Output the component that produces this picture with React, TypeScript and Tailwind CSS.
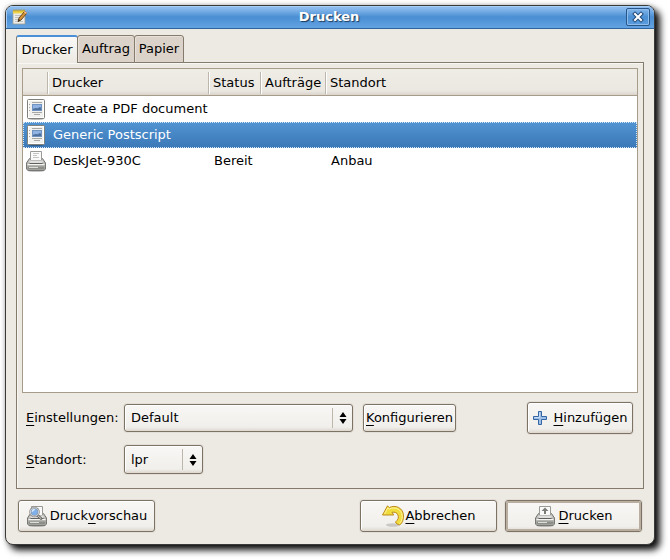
import { useId, useState, type ReactNode } from "react";

function NotepadIcon() {
  return (
    <svg viewBox="0 0 16 16" className="size-4 shrink-0" aria-hidden="true">
      <rect x="1" y="2" width="12" height="13" fill="#ececea" stroke="#a19f94" strokeWidth="0.8" />
      <path d="M1 1.500h12v3H1z" fill="#edd44a" />
      <path d="M2 .5v2M4 .5v2M6 .5v2M8 .5v2M10 .5v2M12 .5v2" stroke="#b78a10" strokeWidth="0.9" />
      <path d="M3 6.500h7M3 8.500h5M3 10.500h4M3 12.500h8" stroke="#b5b5b0" strokeWidth="0.8" />
      <path d="M6 12.500l1-3.500 5.500-6.500 2.500 1.500-6 7z" fill="#d69238" stroke="#5a3a10" strokeWidth="0.9" />
      <path d="M6 12.500l.8-2.500 1.500 1.400z" fill="#2b2118" />
      <path d="M12.300 2.700l2.400 1.600" stroke="#e9b9a0" strokeWidth="1.400" />
    </svg>
  );
}

function DocumentIcon() {
  return (
    <svg viewBox="0 0 20 22" className="block h-[22px] w-5" aria-hidden="true">
      <ellipse cx="10" cy="20.800" rx="8" ry="1" fill="#000" opacity="0.35" />
      <rect x="1.500" y="1.500" width="17" height="19" rx="1" fill="#f0f0ee" stroke="#80827a" />
      <rect x="2.500" y="2.500" width="15" height="17" fill="none" stroke="#fff" />
      <path d="M3.500 6v1M3.500 9v1M3.500 12v1" stroke="#aaa" />
      <path d="M6 4.500h10M6 14.500h10M8 16.500h6" stroke="#a8a8a5" />
      <rect x="6" y="6" width="10" height="7" fill="#6f92c0" />
      <path d="M7 7h8v3l-2-1-2 2-2-1-2 1z" fill="#8fb3e3" />
      <path d="M7 12v-1l3-1 2 .5 2-1.500 1 1v2z" fill="#4d6f9c" />
    </svg>
  );
}

function PrinterIcon({ mark = "none" }: { mark?: "none" | "arrow" | "lens" }) {
  return (
    <svg viewBox="0 0 22 22" className="block h-[22px] w-[22px] shrink-0" aria-hidden="true">
      <ellipse cx="11" cy="20.500" rx="9" ry="1.300" fill="#000" opacity="0.3" />
      <path d="M4.500 8.500h13l3 4.500v6l-1.500 1.500h-16L1.500 19v-6z" fill="#b4b5b1" stroke="#777874" />
      <path d="M3 12.500l2-3h12l2 3z" fill="#d2d3cf" />
      <path d="M5.500 1.500h11v9h-11z" fill="#fafafa" stroke="#999a96" />
      {mark === "none" && <path d="M8 3.500h6M8 5.500h4M8 7.500h6" stroke="#c5c5c2" />}
      {mark === "arrow" && <path d="M11 2.500L7.500 6H10v3h2V6h2.500z" fill="#7c7d79" />}
      <path d="M5 10.500h12v3H5z" fill="#dfe0dd" />
      <path d="M4.500 13.500h13" stroke="#60615e" />
      <path d="M2.500 14.500h17" stroke="#f4f4f2" />
      <path d="M2.500 16.500h17v3h-17z" fill="#8d8e8a" />
      <path d="M4 17.500h9" stroke="#dddeda" />
      {mark === "lens" && (
        <g>
          <path d="M11 10l4 3.500" stroke="#686964" strokeWidth="2.800" strokeLinecap="round" />
          <path d="M11 10l4 3.500" stroke="#d6d7d2" strokeWidth="1" strokeLinecap="round" />
          <circle cx="8.500" cy="7" r="4.300" fill="#7fb0ea" stroke="#85868a" strokeWidth="2" />
          <circle cx="8.500" cy="7" r="4.200" fill="none" stroke="#dfe1e0" strokeWidth="0.900" />
          <path d="M6.300 6.800a2.500 2.500 0 012.500-2.300" fill="none" stroke="#dcebfb" strokeWidth="1.300" />
        </g>
      )}
    </svg>
  );
}

function UndoIcon() {
  return (
    <svg viewBox="0 0 24 24" className="block size-6 shrink-0" aria-hidden="true">
      <ellipse cx="12" cy="21" rx="7" ry="1.700" fill="#000" opacity="0.16" />
      <path
        d="M1.500 11L6.500 1.800L8.300 3.600C14 .5 22.500 3.500 22.500 12C22.500 16 21 20 18.500 20.800C16.500 20.500 15 19.500 14.500 18C17 16 18 13.500 17 11C16 8.500 13.500 7.800 11 8.300L12.700 11Z"
        fill="#f0dc3c"
        stroke="#bd8a1c"
        strokeLinejoin="round"
      />
      <path
        d="M3.500 10L6.800 3.800L8.300 5C13.500 2.300 21 5 21.200 12C21.200 15.500 20 18.500 18.300 19.500"
        fill="none"
        stroke="#fff5a0"
      />
    </svg>
  );
}

function PlusIcon() {
  return (
    <svg viewBox="0 0 16 16" className="block size-4 shrink-0" aria-hidden="true">
      <path d="M6.500 1.500h3v5h5v3h-5v5h-3v-5h-5v-3h5z" fill="#9ec0e6" stroke="#3465a4" strokeLinejoin="round" />
      <path d="M7.500 2.500v5h-5" fill="none" stroke="#c9def4" />
    </svg>
  );
}

function Mnemonic({ children }: { children: string }) {
  return <u className="decoration-1 underline-offset-3 [text-decoration-skip-ink:none]">{children}</u>;
}

const face =
  "rounded-[3px] border border-[#7d7365] bg-linear-to-b from-[#f8f7f5] via-[#f1efeb] via-85% to-[#ddd7cf] shadow-[inset_1px_1px_0_#fff,0_0_0_1px_#e3dfd8]";

function Button({ children, className }: { children: ReactNode; className: string }) {
  return (
    <button type="button" className={`${face} flex items-center justify-center whitespace-nowrap ${className}`}>
      {children}
    </button>
  );
}

function Select({ id, options, className }: { id: string; options: string[]; className: string }) {
  return (
    <div className={`relative ${className}`}>
      <select id={id} className={`${face} size-full appearance-none pr-7 pl-[6px] outline-none`}>
        {options.map((option) => (
          <option key={option}>{option}</option>
        ))}
      </select>
      <div className="pointer-events-none absolute inset-y-1 right-0 flex w-[21px] items-center justify-center border-l border-[#bdb6ab]">
        <svg viewBox="0 0 8 12" className="h-3 w-2" aria-hidden="true">
          <path d="M4 0l3.500 5h-7zM4 12l3.500-5h-7z" fill="#000" />
        </svg>
      </div>
    </div>
  );
}

const printers = [
  { name: "Create a PDF document", icon: <DocumentIcon />, status: "", jobs: "", location: "" },
  { name: "Generic Postscript", icon: <DocumentIcon />, status: "", jobs: "", location: "" },
  { name: "DeskJet-930C", icon: <PrinterIcon />, status: "Bereit", jobs: "", location: "Anbau" },
];

const columns = ["Drucker", "Status", "Aufträge", "Standort"];

function PrinterTable() {
  const [selected, setSelected] = useState(1);
  return (
    <div className="h-[325px] border border-[#a79b8a] bg-white">
      <table className="w-full table-fixed border-separate border-spacing-0 text-left">
        <colgroup>
          <col className="w-6" />
          <col className="w-[161px]" />
          <col className="w-[52px]" />
          <col className="w-[65px]" />
          <col />
        </colgroup>
        <thead>
          <tr className="h-[27px] bg-linear-to-b from-[#efece6] from-10% via-[#ebe8e2] via-80% to-[#d6d1c8]">
            <td className="border-b border-[#a79b8a] p-0" />
            {columns.map((column) => (
              <th key={column} scope="col" className="border-b border-[#a79b8a] p-0 font-normal">
                <div className="mt-[3px] mb-px flex h-[22px] items-center border-l border-[#bcb6ac] pl-1 whitespace-nowrap shadow-[inset_1px_0_0_#fff]">
                  {column}
                </div>
              </th>
            ))}
          </tr>
        </thead>
        <tbody>
          {printers.map((printer, index) => (
            <tr
              key={printer.name}
              aria-selected={index === selected}
              onClick={() => setSelected(index)}
              className={
                index === selected
                  ? "h-[26px] bg-linear-to-b from-[#5294d2] to-[#3b78b8] text-white outline-1 -outline-offset-1 outline-dotted outline-[#d5e6f7]"
                  : "h-[26px]"
              }
            >
              <td className="p-0">
                <div className="flex w-[26px] justify-center">{printer.icon}</div>
              </td>
              <td className="p-0 pl-[6px] whitespace-nowrap">{printer.name}</td>
              <td className="p-0 pl-[6px]">{printer.status}</td>
              <td className="p-0 pl-[6px]">{printer.jobs}</td>
              <td className="p-0 pl-[6px]">{printer.location}</td>
            </tr>
          ))}
        </tbody>
      </table>
    </div>
  );
}

const tabs = [
  { label: "Drucker", width: "w-[62px]" },
  { label: "Auftrag", width: "w-[58px]" },
  { label: "Papier", width: "w-[50px]" },
];

function Tabs() {
  return (
    <div role="tablist" className="relative z-10 -mb-px flex items-start">
      {tabs.map((tab, index) => (
        <button
          key={tab.label}
          type="button"
          role="tab"
          aria-selected={index === 0}
          className={`flex h-7 items-center justify-center rounded-t-[3px] border border-[#857b6c] whitespace-nowrap ${tab.width} ${
            index === 0
              ? "border-t-2 border-b-0 border-t-[#4a90d9] bg-linear-to-b from-[#faf9f7] to-[#edeae3]"
              : "-ml-px bg-[#dbd3c9] shadow-[inset_1px_1px_0_#e8e2da]"
          }`}
        >
          {tab.label}
        </button>
      ))}
    </div>
  );
}

export default function App() {
  const settingsId = useId();
  const locationId = useId();
  return (
    <main className="min-h-screen bg-white pt-[5px] pr-[15px] pb-[15px] pl-[5px] font-['DejaVu_Sans',sans-serif] text-[13px] leading-4 text-black">
      <section
        aria-label="Drucken"
        className="overflow-hidden rounded-lg border border-[#3a3a38] bg-[#edeae3] shadow-[5px_5px_7px_rgba(0,0,0,0.95),0_0_5px_rgba(0,0,0,0.25)]"
      >
        <header className="flex h-[23px] items-center border-b border-[#2f659f] bg-linear-to-b from-[#8bbbee] from-10% via-[#4a8fd3] via-50% to-[#62a2e2] pr-1 pl-[6px] shadow-[inset_1px_1px_0_#a9cef5]">
          <NotepadIcon />
          <h1 className="flex-1 pl-1 text-center text-[13px] font-bold text-white [text-shadow:1px_1px_1px_#1b3a5c]">
            Drucken
          </h1>
          <button
            type="button"
            aria-label="Schließen"
            className="flex h-[18px] w-6 items-center justify-center rounded-[2px] border border-[#28568a] shadow-[inset_0_0_0_1px_#8dbdec]"
          >
            <svg viewBox="0 0 12 12" className="size-3" aria-hidden="true">
              <path d="M3 3l6 6M9 3l-6 6" stroke="#234b78" strokeWidth="4" strokeLinecap="square" />
              <path d="M3 3l6 6M9 3l-6 6" stroke="#fff" strokeWidth="2" strokeLinecap="square" />
            </svg>
          </button>
        </header>

        <div className="px-[10px] pt-[6px] pb-3">
          <Tabs />
          <div
            role="tabpanel"
            className="border border-[#857b6c] px-[5px] pt-[5px] pb-[14px] shadow-[inset_1px_1px_0_#f8f6f2]"
          >
            <PrinterTable />
            <div className="mt-[9px] flex items-center pr-[5px] pl-1">
              <label htmlFor={settingsId} className="w-[98px]">
                <Mnemonic>E</Mnemonic>instellungen:
              </label>
              <Select id={settingsId} options={["Default"]} className="h-7 w-[229px]" />
              <Button className="ml-[10px] h-7 w-[93px]">
                <span>
                  <Mnemonic>K</Mnemonic>onfigurieren
                </span>
              </Button>
              <Button className="ml-auto h-8 w-[106px] gap-[5px]">
                <PlusIcon />
                <span>
                  <Mnemonic>H</Mnemonic>inzufügen
                </span>
              </Button>
            </div>
            <div className="mt-[11px] flex items-center pl-1">
              <label htmlFor={locationId} className="w-[98px]">
                <Mnemonic>S</Mnemonic>tandort:
              </label>
              <Select id={locationId} options={["lpr"]} className="h-[29px] w-[79px]" />
            </div>
          </div>

          <footer className="mt-[11px] flex gap-2 px-0.5">
            <Button className="mr-auto h-8 w-[137px] gap-[2px]">
              <PrinterIcon mark="lens" />
              <span>
                Druck<Mnemonic>v</Mnemonic>orschau
              </span>
            </Button>
            <Button className="h-8 w-[137px]">
              <UndoIcon />
              <span>
                <Mnemonic>A</Mnemonic>bbrechen
              </span>
            </Button>
            <Button className="h-8 w-[137px] gap-[2px] outline-2 -outline-offset-3 outline-[#b9aea0]">
              <PrinterIcon mark="arrow" />
              <span>
                <Mnemonic>D</Mnemonic>rucken
              </span>
            </Button>
          </footer>
        </div>
      </section>
    </main>
  );
}
